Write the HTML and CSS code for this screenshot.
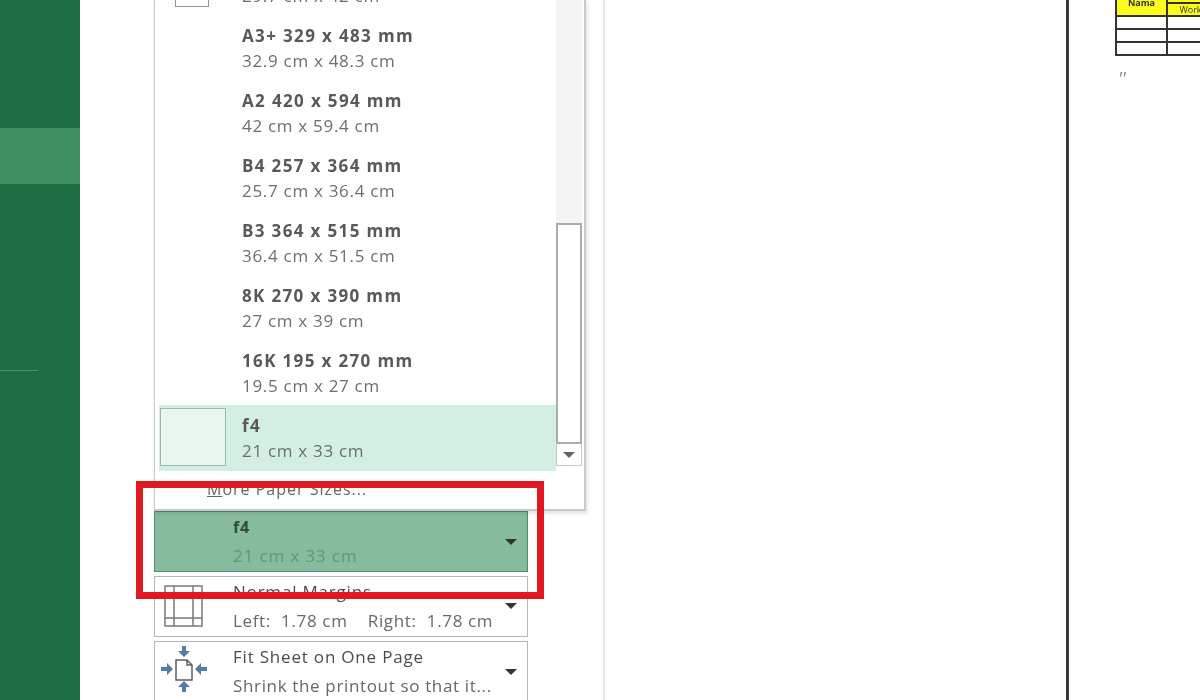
FILE: index.html
```html
<!DOCTYPE html>
<html lang="en">
<head>
<meta charset="utf-8">
<title>Print settings</title>
<link rel="stylesheet" href="styles.css">
</head>
<body>
<div class="app">
  <nav class="sidebar">
    <div class="nav-active"></div>
    <div class="nav-rule"></div>
  </nav>
  <main class="settings">
    <button class="setting setting-selected">
      <span class="setting-icon"></span>
      <span class="setting-text"><span class="setting-title">f4</span><span class="setting-sub">21 cm x 33 cm</span></span>
      <span class="caret"></span>
    </button>
    <button class="setting setting-margins">
      <span class="setting-icon">
        <svg width="40" height="42" viewBox="0 0 40 42" fill="none" stroke="#75797d" stroke-width="1.5"><rect x="1" y="1" width="37" height="40"/><path d="M10 1v40M29 1v40M1 8h37M1 33h37"/></svg>
      </span>
      <span class="setting-text"><span class="setting-title">Normal Margins</span><span class="setting-sub">Left:&nbsp; 1.78 cm &nbsp;&nbsp;&nbsp;Right:&nbsp; 1.78 cm</span></span>
      <span class="caret"></span>
    </button>
    <button class="setting setting-fit">
      <span class="setting-icon">
        <svg width="46" height="46" viewBox="0 0 46 46" fill="none"><path d="M15 14h11l5 5v15H15z M26 14v5h5" stroke="#5b5f63" stroke-width="1.5"/><g fill="#4d7ea8"><path d="M21 0h4v5h4l-6 6-6-6h4z"/><path d="M25 46h-4v-5h-4l6-6 6 6h-4z"/><path d="M0 21v4h6v4l6-6-6-6v4z"/><path d="M46 25v-4h-6v-4l-6 6 6 6v-4z"/></g></svg>
      </span>
      <span class="setting-text"><span class="setting-title">Fit Sheet on One Page</span><span class="setting-sub">Shrink the printout so that it...</span></span>
      <span class="caret"></span>
    </button>

    <div class="menu">
      <div class="menu-body">
        <ul class="sizes">
          <li class="size size-first"><span class="thumb"></span><span class="size-text"><b>A3 297 x 420 mm</b><span>29.7 cm x 42 cm</span></span></li>
          <li class="size"><span class="size-text"><b>A3+ 329 x 483 mm</b><span>32.9 cm x 48.3 cm</span></span></li>
          <li class="size"><span class="size-text"><b>A2 420 x 594 mm</b><span>42 cm x 59.4 cm</span></span></li>
          <li class="size"><span class="size-text"><b>B4 257 x 364 mm</b><span>25.7 cm x 36.4 cm</span></span></li>
          <li class="size"><span class="size-text"><b>B3 364 x 515 mm</b><span>36.4 cm x 51.5 cm</span></span></li>
          <li class="size"><span class="size-text"><b>8K 270 x 390 mm</b><span>27 cm x 39 cm</span></span></li>
          <li class="size"><span class="size-text"><b>16K 195 x 270 mm</b><span>19.5 cm x 27 cm</span></span></li>
          <li class="size size-current"><span class="thumb thumb-current"></span><span class="size-text"><b>f4</b><span>21 cm x 33 cm</span></span></li>
        </ul>
        <div class="scrollbar">
          <div class="scroll-track"></div>
          <div class="scroll-thumb"></div>
          <div class="scroll-down"><span class="caret caret-small"></span></div>
        </div>
      </div>
      <div class="more"><u>M</u>ore Paper Sizes...</div>
    </div>
    <div class="highlight"></div>
  </main>
  <section class="preview">
    <div class="page">
      <table class="sheet">
        <tr class="head"><td class="name" rowspan="2">Nama</td><td class="top">&nbsp;</td></tr>
        <tr class="head"><td class="work">Work</td></tr>
        <tr><td></td><td></td></tr>
        <tr><td></td><td></td></tr>
        <tr><td></td><td></td></tr>
      </table>
      <div class="quote">''</div>
    </div>
  </section>
</div>
</body>
</html>
```
FILE: styles.css
```css
* { box-sizing: border-box; }
html, body { margin: 0; height: 100%; background: #fff; }
body { font-family: "Open Sans", "Noto Sans", sans-serif; color: #555; overflow: hidden; }
.app { display: flex; width: 1200px; height: 700px; overflow: hidden; filter: blur(0.45px); }

.sidebar { position: relative; flex: 0 0 80px; background: #1f6e43; padding-top: 128px; }
.nav-active { height: 56px; background: #3f8f62; }
.nav-rule { height: 1px; width: 38px; margin-top: 186px; background: #4d9169; }

.settings { position: relative; flex: 0 0 525px; height: 700px; border-right: 2px solid #e8e8e8; padding: 511px 0 0 74px; display: flex; flex-direction: column; gap: 4px; }
.setting { display: flex; width: 374px; flex: none; padding: 0; background: #fff; border: 1px solid #b5b8b8; font: inherit; color: inherit; text-align: left; position: relative; }
.setting-selected { height: 61px; background: #86bc9d; border-color: #4f8f6c; }
.setting-margins { height: 61px; }
.setting-fit { height: 70px; }
.setting-icon { flex: 0 0 78px; display: flex; justify-content: center; padding: 8px 20px 0 0; }
.setting-fit .setting-icon { padding-top: 4px; }
.setting-text { display: flex; flex-direction: column; font-size: 17px; line-height: 22px; padding-top: 4px; gap: 7px; white-space: nowrap; }
.setting-title { color: #4c4c4c; letter-spacing: .8px; }
.setting-sub { color: #686868; letter-spacing: .65px; }
.setting-selected .setting-title { font-weight: 700; font-size: 16px; color: #2f4f3e; }
.setting-selected .setting-sub { color: #5f9a79; letter-spacing: .85px; }
.caret { position: absolute; right: 10px; top: 27px; width: 0; height: 0; border: 6px solid transparent; border-top-color: #333; border-bottom: 0; }
.setting-margins .caret { top: 26px; }

.menu { position: absolute; left: 74px; top: 0; width: 432px; height: 511px; background: #fff; border: 2px solid #c9c9c9; border-width: 0 2px 2px 1px; box-shadow: 1px 2px 4px rgba(0,0,0,.14); display: flex; flex-direction: column; }
.menu-body { position: relative; height: 471px; overflow: hidden; }
.sizes { list-style: none; margin: 0; padding: 0 0 0 4px; position: absolute; left: 0; right: 0; bottom: 0; width: 401px; }
.size { height: 65px; position: relative; padding-left: 83px; display: flex; align-items: center; }
.size-text { display: flex; flex-direction: column; font-size: 17px; line-height: 25px; white-space: nowrap; }
.size-text b { font-weight: 700; color: #595959; letter-spacing: 1.35px; }
.size-text span { color: #6e6e6e; letter-spacing: .7px; }
.size-current { background: #d2efe1; height: 66px; }
.size-first .thumb { position: absolute; left: 16px; top: 8px; width: 34px; height: 49px; border: 1px solid #8f9494; background: #fff; }
.thumb-current { position: absolute; left: 1px; top: 3px; width: 66px; height: 58px; border: 1px solid #9db8a9; background: #e9f5ef; }

.scrollbar { position: absolute; right: 2px; top: 0; bottom: 5px; width: 26px; display: flex; flex-direction: column; }
.scroll-track { flex: 0 0 223px; background: #f3f3f3; }
.scroll-thumb { flex: 0 0 221px; background: #fff; border: 2px solid #ababab; }
.scroll-down { flex: 1; position: relative; border: 1px solid #c8c8c8; border-top: 0; background: #fff; }
.caret-small { right: 6px; top: 8px; border-width: 6px; border-bottom: 0; border-top-color: #666; }

.more { padding: 7px 0 0 52px; font-size: 16px; line-height: 22px; color: #666; letter-spacing: 1px; }

.highlight { position: absolute; left: 56px; top: 481px; width: 408px; height: 118px; border: 7px solid #e01822; pointer-events: none; }

.preview { flex: 1; min-width: 0; padding-left: 461px; }
.page { height: 700px; border-left: 3px solid #3a3a3a; padding-left: 46px; overflow: hidden; }
.sheet { border-collapse: collapse; width: 100px; margin-top: -11px; table-layout: fixed; font-size: 9px; line-height: 11px; }
.sheet td { border: 2px solid #333; height: 13px; padding: 0; text-align: center; }
.sheet tr td:first-child { width: 51px; }
.sheet .head td { background: #fbfb1e; color: #333; }
.sheet .name { font-weight: 700; vertical-align: top; padding-top: 6px; }
.quote { margin: 15px 0 0 3px; font-size: 18px; line-height: 14px; font-style: italic; color: #888; }
```
